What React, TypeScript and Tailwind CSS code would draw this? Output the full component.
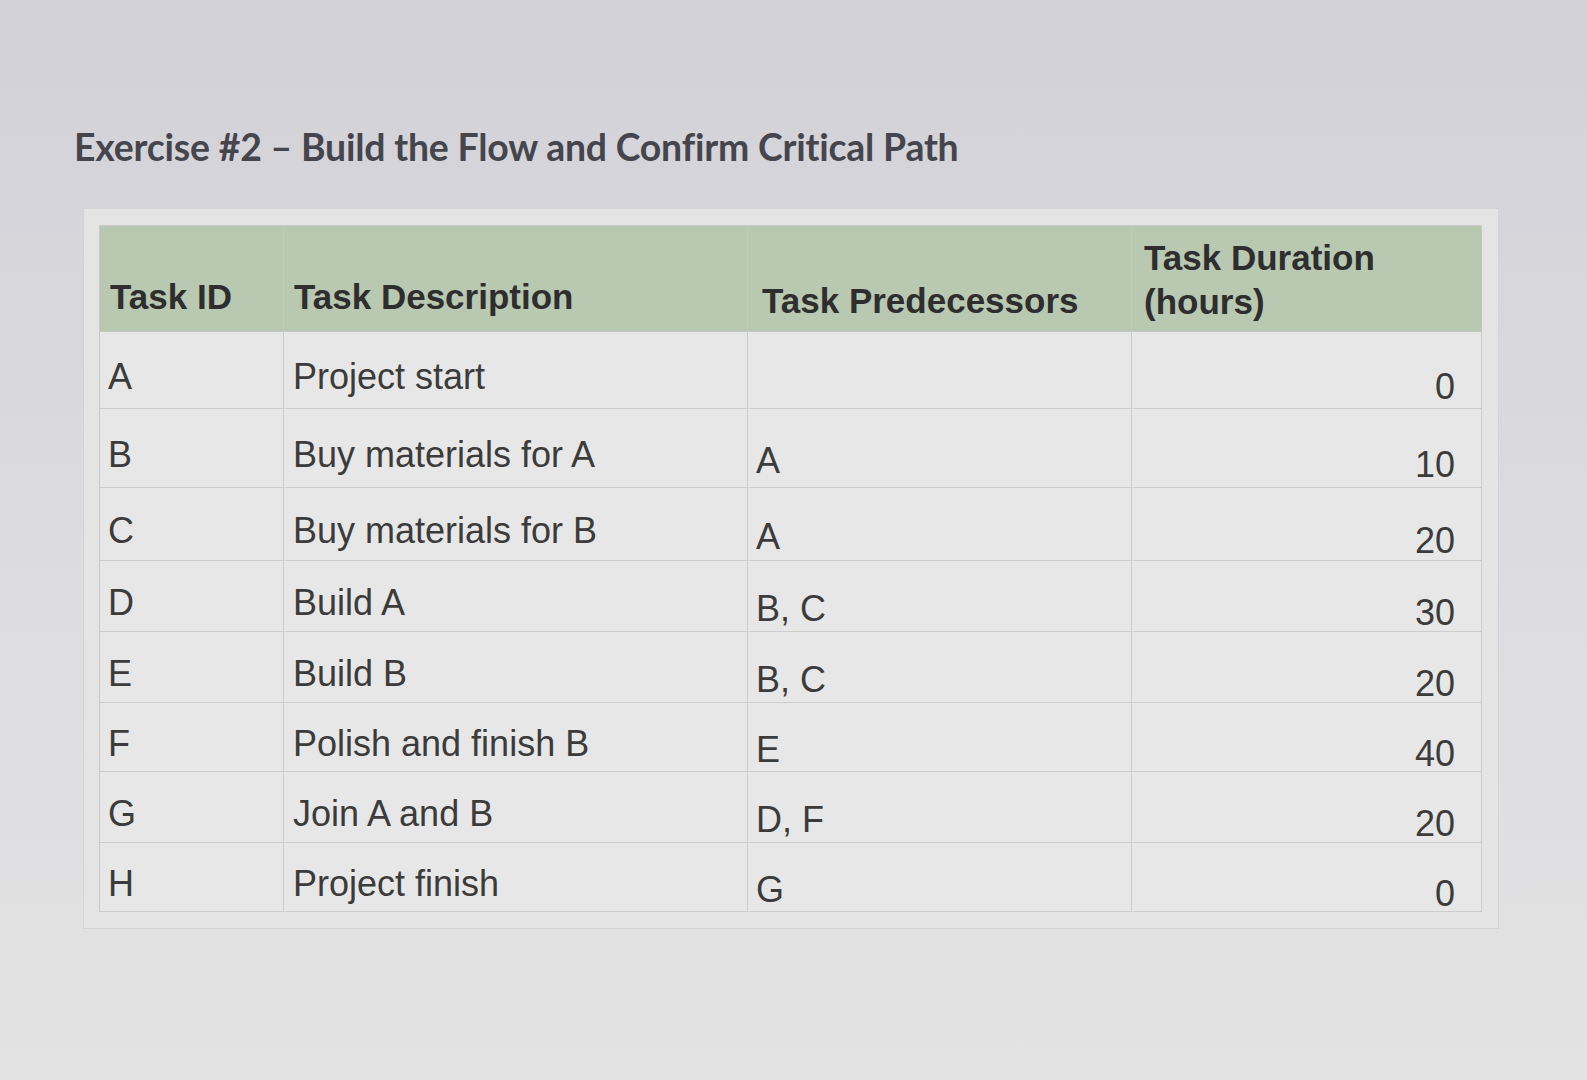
import React from "react";

const rows = [
  { id: "A", desc: "Project start", pred: "", dur: "0", h: 77 },
  { id: "B", desc: "Buy materials for A", pred: "A", dur: "10", h: 79 },
  { id: "C", desc: "Buy materials for B", pred: "A", dur: "20", h: 73 },
  { id: "D", desc: "Build A", pred: "B, C", dur: "30", h: 71 },
  { id: "E", desc: "Build B", pred: "B, C", dur: "20", h: 71 },
  { id: "F", desc: "Polish and finish B", pred: "E", dur: "40", h: 69 },
  { id: "G", desc: "Join A and B", pred: "D, F", dur: "20", h: 71 },
  { id: "H", desc: "Project finish", pred: "G", dur: "0", h: 69 },
];

const cols = "grid grid-cols-[184px_464px_384px_350px]";

export default function App() {
  return (
    <div className="w-[1587px] h-[1080px] overflow-hidden bg-gradient-to-b from-[#d2d1d7] via-[#dcdbdf] to-[#e3e3e3] font-['Liberation_Sans',Arial,sans-serif]">
      <div className="pt-[123px] pl-[74px]">
        <h1 className="font-['Lato',sans-serif] font-bold text-[37.4px] leading-[48px] text-[#45454d] tracking-[-0.2px]">
          Exercise #2 – Build the Flow and Confirm Critical Path
        </h1>
      </div>
      <div className="ml-[83px] mt-[37px] w-[1416px] bg-[#e4e4e4] border border-[#d4d4d4] pl-[15px] pt-[16px] pb-[16px] pr-[17px]">
        <div className="border-t border-l border-[#c9c9c9]">
          <div className={`${cols} bg-[#b9c8b1] text-[#2e2e2e] font-bold text-[35px]`}>
            <div className="h-[106px] border-r border-b border-[#c3c9bf] flex items-end pb-[8px] pl-[10px]">Task ID</div>
            <div className="h-[106px] border-r border-b border-[#c3c9bf] flex items-end pb-[8px] pl-[10px]">Task Description</div>
            <div className="h-[106px] border-r border-b border-[#c3c9bf] flex items-end pb-[4px] pl-[14px]">Task Predecessors</div>
            <div className="h-[106px] border-r border-b border-[#c3c9bf] flex flex-col justify-center pl-[12px] leading-[44px] pt-[2px]">
              <span>Task Duration</span>
              <span>(hours)</span>
            </div>
          </div>
          {rows.map((r) => (
            <div key={r.id} className={`${cols} bg-[#e7e7e7] text-[#3b3b3b] text-[36px]`}>
              <div style={{ height: r.h }} className="border-r border-b border-[#cdcdcd] flex items-center pl-[8px] pt-[14px]">{r.id}</div>
              <div style={{ height: r.h }} className="border-r border-b border-[#cdcdcd] flex items-center pl-[9px] pt-[14px]">{r.desc}</div>
              <div style={{ height: r.h }} className="border-r border-b border-[#cdcdcd] flex items-center pl-[8px] pt-[26px]">{r.pred}</div>
              <div style={{ height: r.h }} className="border-r border-b border-[#cdcdcd] flex items-center justify-end pr-[26px] pt-[34px]">{r.dur}</div>
            </div>
          ))}
        </div>
      </div>
    </div>
  );
}
